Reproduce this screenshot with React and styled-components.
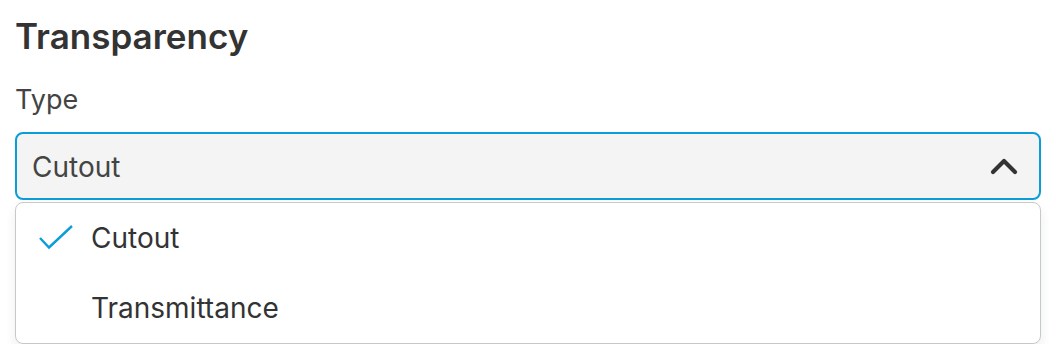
import React from "react";
import styled, { createGlobalStyle } from "styled-components";

const Global = createGlobalStyle`
  html, body { margin: 0; padding: 0; background: #fff; }
  body { font-family: Inter, "Noto Sans", sans-serif; color: #333; }
`;

const Page = styled.div`
  padding: 16px 15px 0 15px;
  display: flex;
  flex-direction: column;
`;

const Title = styled.h2`
  margin: 0;
  font-size: 35px;
  font-weight: 600;
  line-height: 40px;
  color: #333;
`;

const Label = styled.div`
  margin-top: 27px;
  font-size: 27px;
  line-height: 34px;
  color: #444;
`;

const Field = styled.div`
  margin-top: 15px;
  display: flex;
  flex-direction: column;
  gap: 2px;
`;

const Trigger = styled.div`
  height: 68px;
  box-sizing: border-box;
  border: 2px solid #0b9dd9;
  border-radius: 8px;
  background: #f4f4f4;
  display: flex;
  align-items: center;
  justify-content: space-between;
  padding: 2px 21px 0 15px;
  font-size: 28px;
  color: #444;
`;

const ChevronBox = styled.svg`
  margin-top: -2px;
`;

const Menu = styled.div`
  box-sizing: border-box;
  border: 1px solid #c8c8c8;
  border-radius: 8px;
  background: #fff;
  box-shadow: 0 6px 12px rgba(0, 40, 60, 0.08);
  display: flex;
  flex-direction: column;
`;

const Option = styled.div`
  height: 70px;
  display: flex;
  align-items: center;
  font-size: 28px;
  color: #333;
`;

const CheckSlot = styled.div`
  width: 75px;
  display: flex;
  justify-content: flex-end;
  padding-right: 17px;
  box-sizing: border-box;
`;

const Check = () => (
  <svg width="35" height="26" viewBox="0 0 35 26" fill="none">
    <path d="M1 13 L10 22.5 L33 1" stroke="#0b9dd9" strokeWidth="2.4" />
  </svg>
);

const Chevron = () => (
  <ChevronBox width="28" height="18" viewBox="0 0 28 18" fill="none">
    <path d="M3 15 L14 4 L25 15" stroke="#333" strokeWidth="4.2" strokeLinecap="round" strokeLinejoin="round" />
  </ChevronBox>
);

export default function App() {
  return (
    <>
      <Global />
      <Page>
        <Title>Transparency</Title>
        <Label>Type</Label>
        <Field>
          <Trigger>
            <span>Cutout</span>
            <Chevron />
          </Trigger>
          <Menu>
            <Option>
              <CheckSlot><Check /></CheckSlot>
              Cutout
            </Option>
            <Option>
              <CheckSlot />
              Transmittance
            </Option>
          </Menu>
        </Field>
      </Page>
    </>
  );
}
